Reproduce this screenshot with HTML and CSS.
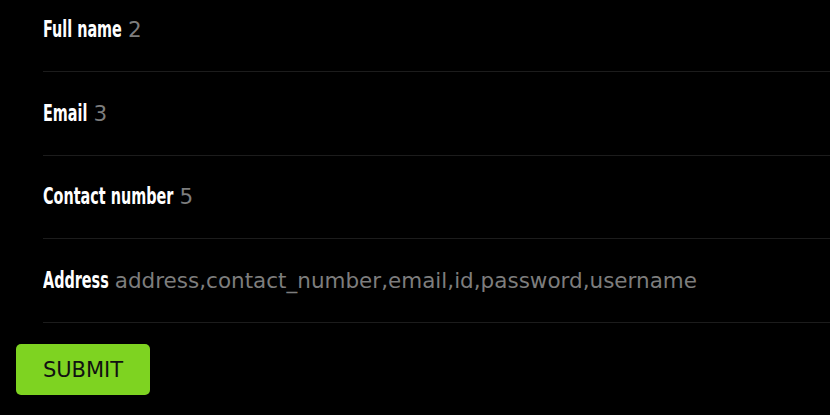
FILE: index.html
```html
<!DOCTYPE html>
<html>
<head>
<meta charset="utf-8">
<link rel="stylesheet" href="styles.css">
</head>
<body>
<form class="form">
  <ul class="fields">
    <li class="field"><span class="label">Full name</span><span class="value">2</span></li>
    <li class="field"><span class="label">Email</span><span class="value">3</span></li>
    <li class="field"><span class="label">Contact number</span><span class="value">5</span></li>
    <li class="field"><span class="label">Address</span><span class="value">address,contact_number,email,id,password,username</span></li>
  </ul>
  <button type="button" class="submit">SUBMIT</button>
</form>
</body>
</html>
```
FILE: styles.css
```css
html, body {
  margin: 0;
  padding: 0;
  background: #000;
  height: 100%;
  overflow: hidden;
}
.form {
  padding: 0 0 0 16px;
}
.fields {
  list-style: none;
  margin: 0 0 21.5px 27px;
  padding: 0;
}
.field {
  height: 83.5px;
  box-sizing: border-box;
  border-bottom: 1px solid #1c1c1c;
  display: flex;
  align-items: center;
  gap: 6px;
  white-space: pre;
}
.field:first-child {
  height: 72px;
  padding-bottom: 12px;
}
.label {
  font-family: "DejaVu Sans Condensed", sans-serif;
  font-weight: bold;
  font-size: 16px;
  color: #fff;
  display: inline-block;
  transform: scaleY(1.45);
}
.value {
  font-family: "DejaVu Sans", sans-serif;
  font-size: 21.5px;
  color: #7d7d7d;
}
.submit {
  display: block;
  width: 134px;
  height: 51px;
  border: none;
  border-radius: 5px;
  background: #7ed321;
  color: #111;
  font-family: "DejaVu Sans", sans-serif;
  font-size: 21px;
  padding: 0;
}
```
